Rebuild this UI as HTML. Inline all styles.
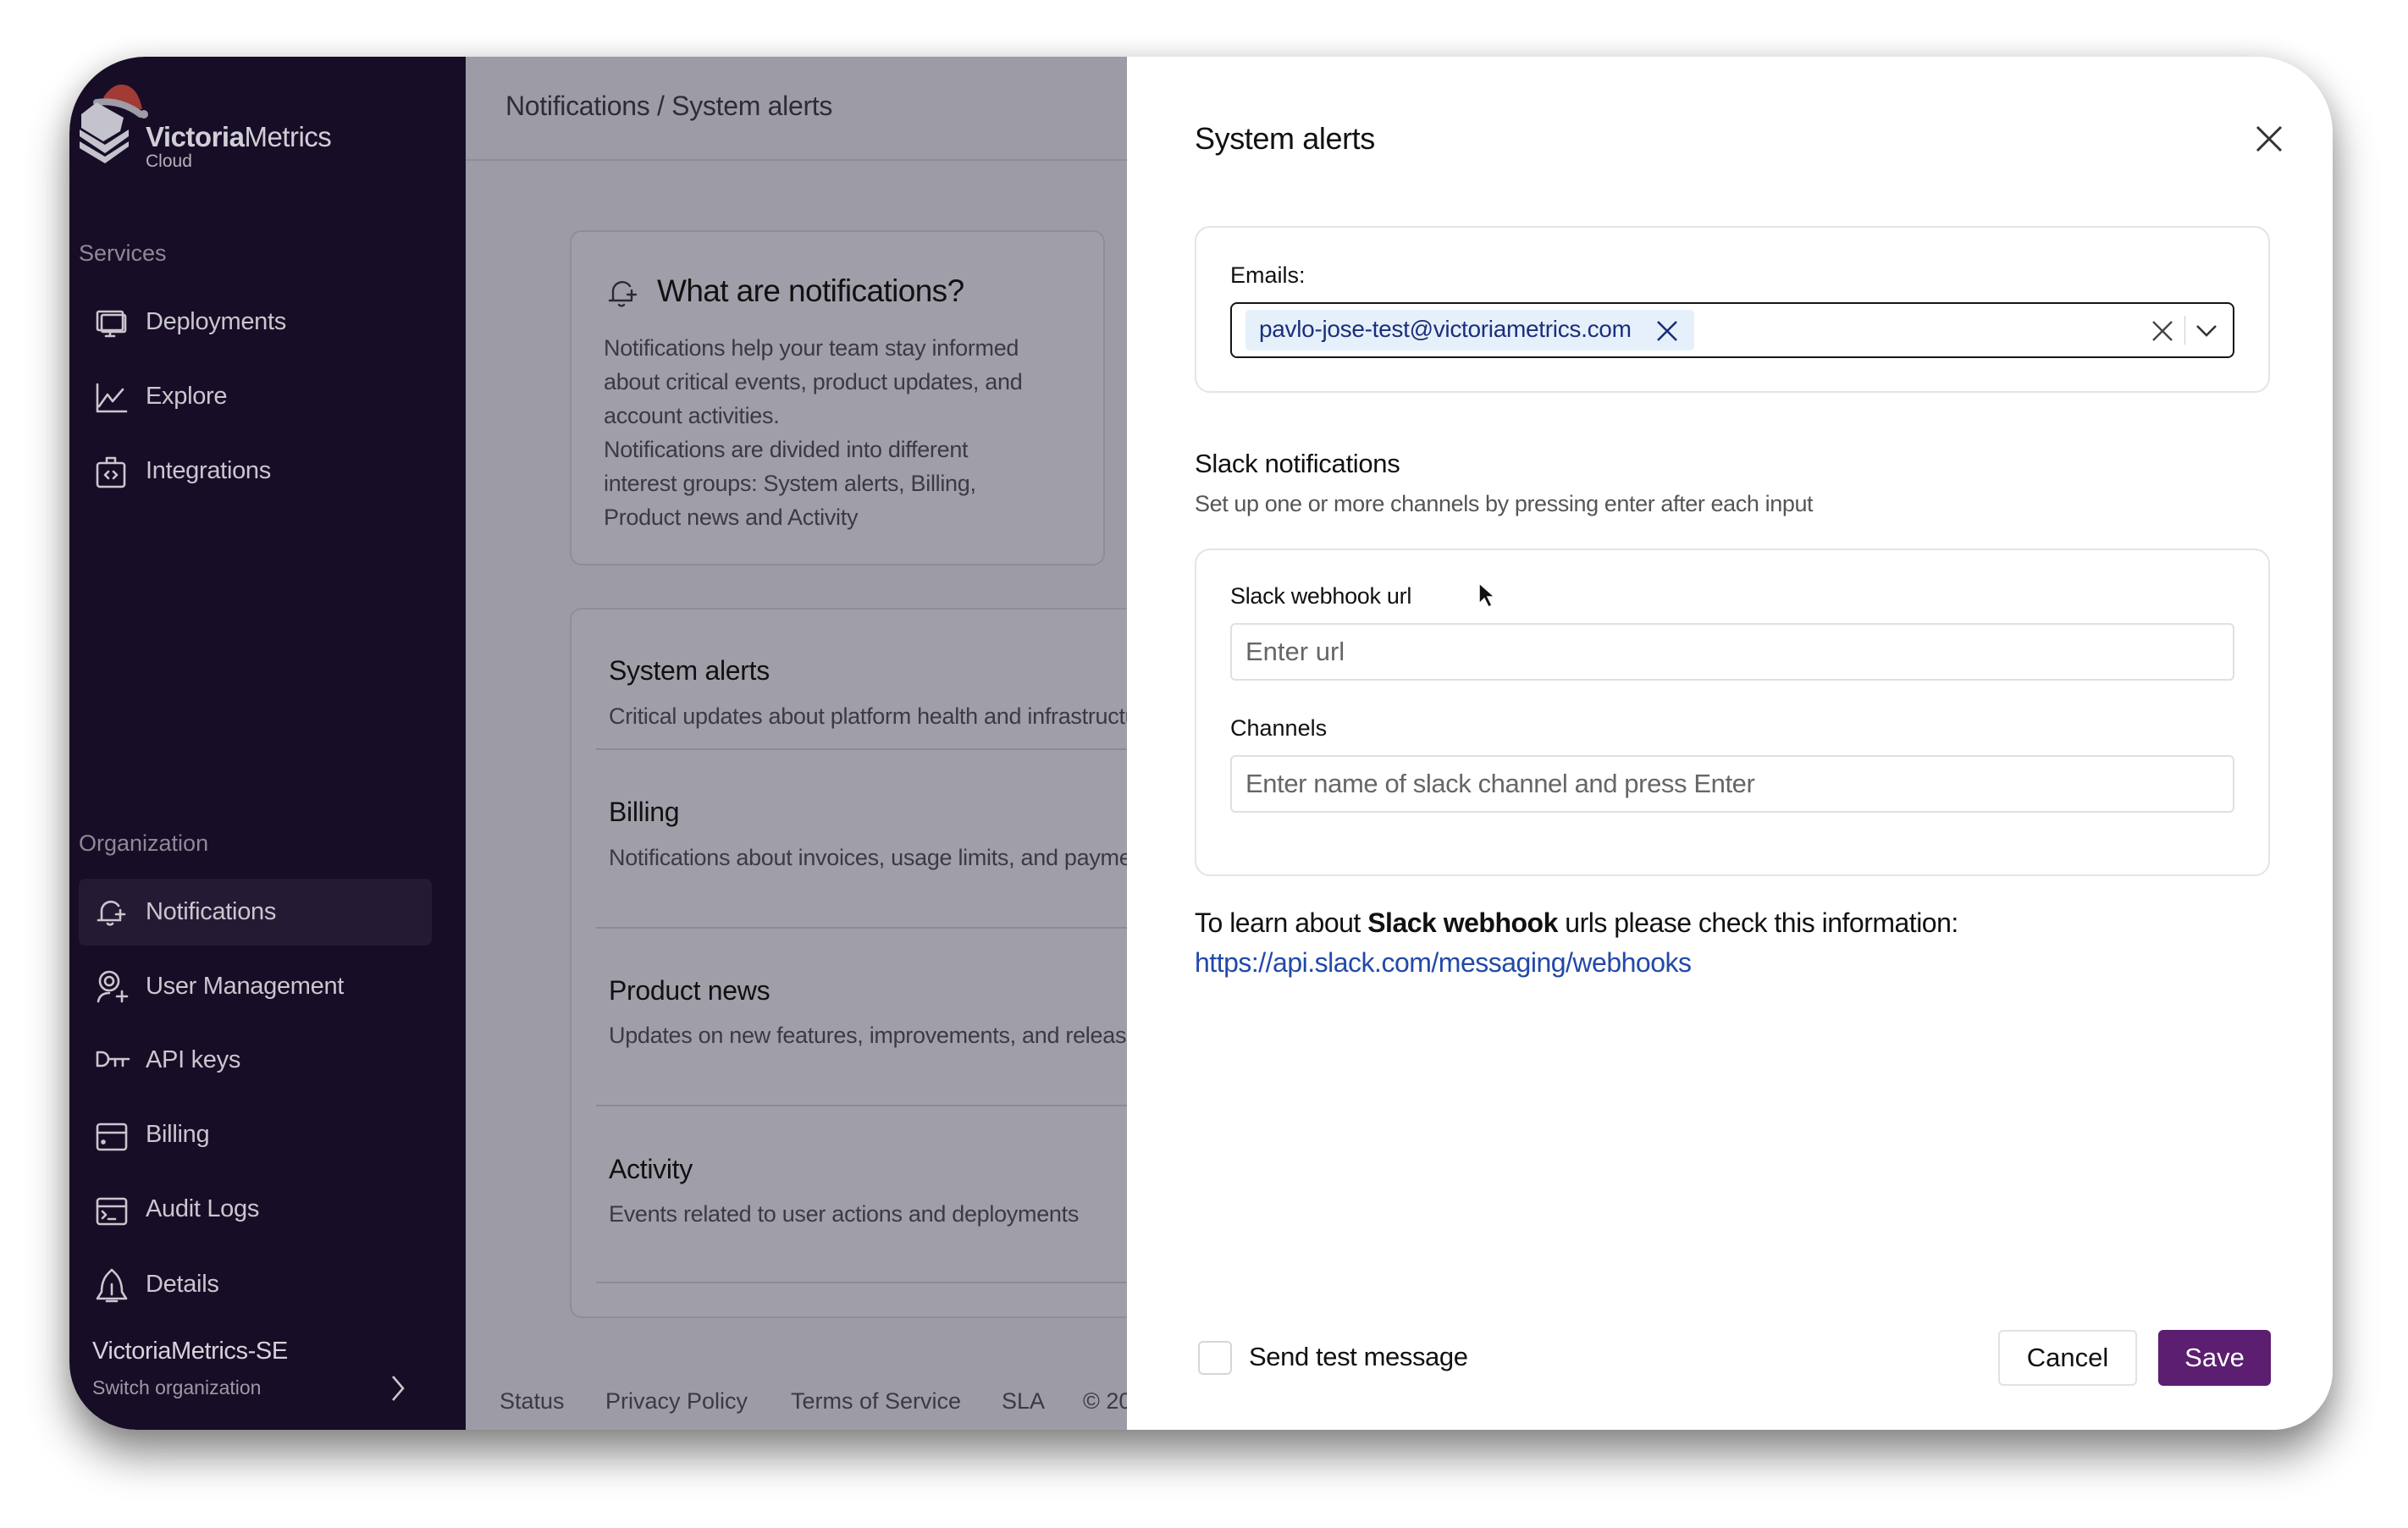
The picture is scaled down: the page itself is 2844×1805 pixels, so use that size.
<!DOCTYPE html>
<html><head><meta charset="utf-8">
<style>
*{margin:0;padding:0;box-sizing:border-box}
body{width:2844px;height:1805px;background:#fff;position:relative;overflow:hidden;font-family:"Liberation Sans",sans-serif}
.a{position:absolute;white-space:nowrap}
#win{position:absolute;left:82px;top:67px;width:2673px;height:1622px;border-radius:90px 90px 70px 80px;overflow:hidden;box-shadow:0 30px 50px rgba(0,0,0,.45),0 0 30px rgba(0,0,0,.12)}
#side{position:absolute;left:0;top:0;width:468px;height:1622px;background:#170d26}
#main{position:absolute;left:468px;top:0;width:781px;height:1622px;background:#9d9ca6;overflow:hidden}
#drawer{position:absolute;left:1249px;top:0;width:1424px;height:1622px;background:#fff}
.nav{color:#c9c7ce;font-size:29px;letter-spacing:-.3px}
.ic{position:absolute;left:30px}
.ic svg{stroke:#c9c7ce;fill:none;stroke-width:2.6;stroke-linecap:round;stroke-linejoin:round}
.ct{color:#111;font-size:32px;letter-spacing:-.3px}
.cd{color:#3b3a42;font-size:27px;letter-spacing:-.3px}
.dv{position:absolute;left:154px;width:640px;height:2px;background:#8c8b95}
.ft{position:absolute;top:1573px;font-size:27px;color:#3b3a42;white-space:nowrap}
</style></head><body>
<div id="win">
 <div id="side">
  <svg class="a" style="left:10px;top:28px" width="90" height="100" viewBox="0 0 90 100">
   <path d="M30 20 Q45 -2 62 8 Q72 14 76 34 L40 30 Z" fill="#a23a35"/>
   <path d="M22 26 Q50 22 74 40" stroke="#9e9ca8" stroke-width="8" fill="none" stroke-linecap="round"/>
   <circle cx="78" cy="40" r="5" fill="#9e9ca8"/>
   <path d="M4 40 L22 26 L54 44 L50 60 L30 72 L4 56 Z" fill="#c4c2cc"/>
   <path d="M2 58 L32 76 L60 58 L60 66 L32 86 L2 66 Z" fill="#c4c2cc"/>
   <path d="M2 72 L32 90 L60 72 L60 78 L32 98 L2 80 Z" fill="#c4c2cc"/>
  </svg>
  <div class="a" style="left:90px;top:76px;font-size:33px;color:#d0ced6;letter-spacing:-.5px"><b>Victoria</b>Metrics</div>
  <div class="a" style="left:90px;top:112px;font-size:21px;color:#b4b2ba">Cloud</div>
  <div class="a" style="left:11px;top:217px;font-size:27px;color:#8d8a96">Services</div>
  <div class="ic" style="top:298px"><svg width="40" height="34"><rect x="3" y="3" width="30" height="22" rx="2"/><rect x="8" y="7" width="28" height="20" rx="2"/><path d="M18 27v5M13 32h10"/></svg></div>
  <div class="a nav" style="left:90px;top:297px">Deployments</div>
  <div class="ic" style="top:385px"><svg width="40" height="36"><path d="M3 2v32h34M5 28l10-14 6 8 12-14"/></svg></div>
  <div class="a nav" style="left:90px;top:385px">Explore</div>
  <div class="ic" style="top:470px"><svg width="40" height="40"><rect x="3" y="10" width="32" height="28" rx="3"/><path d="M14 10V4h10v6M16 20l-4 4 4 4M22 20l4 4-4 4"/></svg></div>
  <div class="a nav" style="left:90px;top:473px">Integrations</div>
  <div class="a" style="left:11px;top:914px;font-size:27px;color:#8d8a96">Organization</div>
  <div class="a" style="left:11px;top:971px;width:417px;height:79px;background:#241a33;border-radius:8px"></div>
  <div class="ic" style="top:990px"><svg width="40" height="42"><path d="M8 30V18a11 11 0 0 1 20-5M4 30h26M15 34a4 4 0 0 0 6 0M30 18v10M25 23h10"/></svg></div>
  <div class="a nav" style="left:90px;top:994px">Notifications</div>
  <div class="ic" style="top:1078px"><svg width="44" height="42"><circle cx="17" cy="14" r="11"/><circle cx="17" cy="14" r="5"/><path d="M4 38q2-10 13-10M32 26v12M26 32h12"/></svg></div>
  <div class="a nav" style="left:90px;top:1082px">User Management</div>
  <div class="ic" style="top:1172px"><svg width="44" height="24"><path d="M3 4v16h5a8 8 0 0 0 0-16zM16 12h24M24 12v8M33 12v8"/></svg></div>
  <div class="a nav" style="left:90px;top:1169px">API keys</div>
  <div class="ic" style="top:1258px"><svg width="40" height="36"><rect x="3" y="3" width="34" height="30" rx="3"/><path d="M3 13h34"/><circle cx="10" cy="24" r="1.5"/></svg></div>
  <div class="a nav" style="left:90px;top:1257px">Billing</div>
  <div class="ic" style="top:1346px"><svg width="40" height="36"><rect x="3" y="3" width="34" height="30" rx="3"/><path d="M3 12h34M9 18l4 4-4 4M16 27h8"/></svg></div>
  <div class="a nav" style="left:90px;top:1345px">Audit Logs</div>
  <div class="ic" style="top:1430px"><svg width="40" height="44"><path d="M20 3l4 4q8 8 8 22l5 8H3l5-8q0-14 8-22zM14 40h12M20 20v12"/></svg></div>
  <div class="a nav" style="left:90px;top:1434px">Details</div>
  <div class="a" style="left:27px;top:1513px;font-size:29px;color:#d6d4da;letter-spacing:-.4px">VictoriaMetrics-SE</div>
  <div class="a" style="left:27px;top:1559px;font-size:23px;color:#9d9aa5">Switch organization</div>
  <svg class="a" style="left:378px;top:1556px" width="20" height="34"><path d="M4 3l12 14-12 14" stroke="#c9c7ce" stroke-width="2.6" fill="none"/></svg>
 </div>
 <div id="main">
  <div class="a" style="left:47px;top:40px;font-size:32px;color:#2e2d35;letter-spacing:-.3px">Notifications / System alerts</div>
  <div class="a" style="left:0;top:121px;width:781px;height:2px;background:#8e8d97"></div>
  <div class="a" style="left:123px;top:205px;width:632px;height:396px;border:2px solid #8f8e98;border-radius:14px;background:#a09fa9"></div>
  <svg class="a" style="left:166px;top:256px" width="40" height="46"><path d="M8 32V20a11 11 0 0 1 20-5M4 32h26M15 37a4 4 0 0 0 6 0M30 20v10M25 25h10" stroke="#2a2a30" stroke-width="2.4" fill="none" stroke-linecap="round"/></svg>
  <div class="a" style="left:226px;top:256px;font-size:37px;color:#111;letter-spacing:-.6px">What are notifications?</div>
  <div class="a cd" style="left:163px;top:324px;line-height:40px">Notifications help your team stay informed<br>about critical events, product updates, and<br>account activities.<br>Notifications are divided into different<br>interest groups: System alerts, Billing,<br>Product news and Activity</div>
  <div class="a" style="left:123px;top:651px;width:760px;height:839px;border:2px solid #8f8e98;border-radius:14px;background:#a09fa9"></div>
  <div class="a ct" style="left:169px;top:707px">System alerts</div>
  <div class="a cd" style="left:169px;top:764px">Critical updates about platform health and infrastructure</div>
  <div class="dv" style="top:817px"></div>
  <div class="a ct" style="left:169px;top:874px">Billing</div>
  <div class="a cd" style="left:169px;top:931px">Notifications about invoices, usage limits, and payments</div>
  <div class="dv" style="top:1028px"></div>
  <div class="a ct" style="left:169px;top:1085px">Product news</div>
  <div class="a cd" style="left:169px;top:1141px">Updates on new features, improvements, and releases</div>
  <div class="dv" style="top:1238px"></div>
  <div class="a ct" style="left:169px;top:1296px">Activity</div>
  <div class="a cd" style="left:169px;top:1352px">Events related to user actions and deployments</div>
  <div class="dv" style="top:1447px"></div>
  <div class="ft" style="left:40px">Status</div>
  <div class="ft" style="left:165px">Privacy Policy</div>
  <div class="ft" style="left:384px">Terms of Service</div>
  <div class="ft" style="left:633px">SLA</div>
  <div class="ft" style="left:729px">© 2025</div>
 </div>
 <div id="drawer">
  <div class="a" style="left:80px;top:76px;font-size:36px;color:#111;letter-spacing:-.4px">System alerts</div>
  <svg class="a" style="left:1332px;top:80px" width="34" height="34"><path d="M3 3l28 28M31 3L3 31" stroke="#333" stroke-width="3"/></svg>
  <div class="a" style="left:80px;top:200px;width:1270px;height:197px;border:2px solid #e4e4e4;border-radius:18px"></div>
  <div class="a" style="left:122px;top:243px;font-size:27px;color:#111">Emails:</div>
  <div class="a" style="left:122px;top:290px;width:1186px;height:66px;border:2.5px solid #151515;border-radius:8px"></div>
  <div class="a" style="left:140px;top:299px;width:530px;height:48px;background:#e6f0fb;border-radius:5px"></div>
  <div class="a" style="left:156px;top:306px;font-size:28px;color:#1b2f7a;letter-spacing:-.3px">pavlo-jose-test@victoriametrics.com</div>
  <svg class="a" style="left:625px;top:311px" width="26" height="26"><path d="M2 2l22 22M24 2L2 24" stroke="#1b2f7a" stroke-width="2.6"/></svg>
  <svg class="a" style="left:1210px;top:311px" width="26" height="26"><path d="M2 2l22 22M24 2L2 24" stroke="#444" stroke-width="2.4"/></svg>
  <div class="a" style="left:1249px;top:306px;width:1px;height:34px;background:#ccc"></div>
  <svg class="a" style="left:1262px;top:316px" width="26" height="16"><path d="M2 2l11 11 11-11" stroke="#333" stroke-width="2.6" fill="none"/></svg>
  <div class="a" style="left:80px;top:463px;font-size:31px;color:#111;letter-spacing:-.3px">Slack notifications</div>
  <div class="a" style="left:80px;top:513px;font-size:27px;color:#555;letter-spacing:-.4px">Set up one or more channels by pressing enter after each input</div>
  <div class="a" style="left:80px;top:581px;width:1270px;height:387px;border:2px solid #e4e4e4;border-radius:18px"></div>
  <div class="a" style="left:122px;top:622px;font-size:27px;color:#111;letter-spacing:-.3px">Slack webhook url</div>
  <div class="a" style="left:122px;top:669px;width:1186px;height:68px;border:2px solid #e0e0e0;border-radius:6px"></div>
  <div class="a" style="left:140px;top:685px;font-size:31px;color:#666">Enter url</div>
  <div class="a" style="left:122px;top:778px;font-size:27px;color:#111">Channels</div>
  <div class="a" style="left:122px;top:825px;width:1186px;height:68px;border:2px solid #e0e0e0;border-radius:6px"></div>
  <div class="a" style="left:140px;top:841px;font-size:31px;color:#666;letter-spacing:-.4px">Enter name of slack channel and press Enter</div>
  <svg class="a" style="left:414px;top:620px" width="24" height="34"><path d="M2 2v24l6-6 5 10 4-2-5-10h8z" fill="#111" stroke="#fff" stroke-width="1.5"/></svg>
  <div class="a" style="left:80px;top:1005px;font-size:32px;color:#111;letter-spacing:-.5px">To learn about <b>Slack webhook</b> urls please check this information:</div>
  <div class="a" style="left:80px;top:1052px;font-size:32px;color:#2249a8;letter-spacing:-.5px">https://api.slack.com/messaging/webhooks</div>
  <div class="a" style="left:84px;top:1517px;width:40px;height:40px;border:2px solid #d6d6d6;border-radius:6px"></div>
  <div class="a" style="left:144px;top:1518px;font-size:31px;color:#111;letter-spacing:-.4px">Send test message</div>
  <div class="a" style="left:1029px;top:1504px;width:164px;height:66px;border:2px solid #e2e2e2;border-radius:6px;font-size:31px;color:#111;text-align:center;line-height:62px">Cancel</div>
  <div class="a" style="left:1218px;top:1504px;width:133px;height:66px;background:#5b1e70;border-radius:6px;font-size:31px;color:#fff;text-align:center;line-height:66px">Save</div>
 </div>
</div>
</body></html>
